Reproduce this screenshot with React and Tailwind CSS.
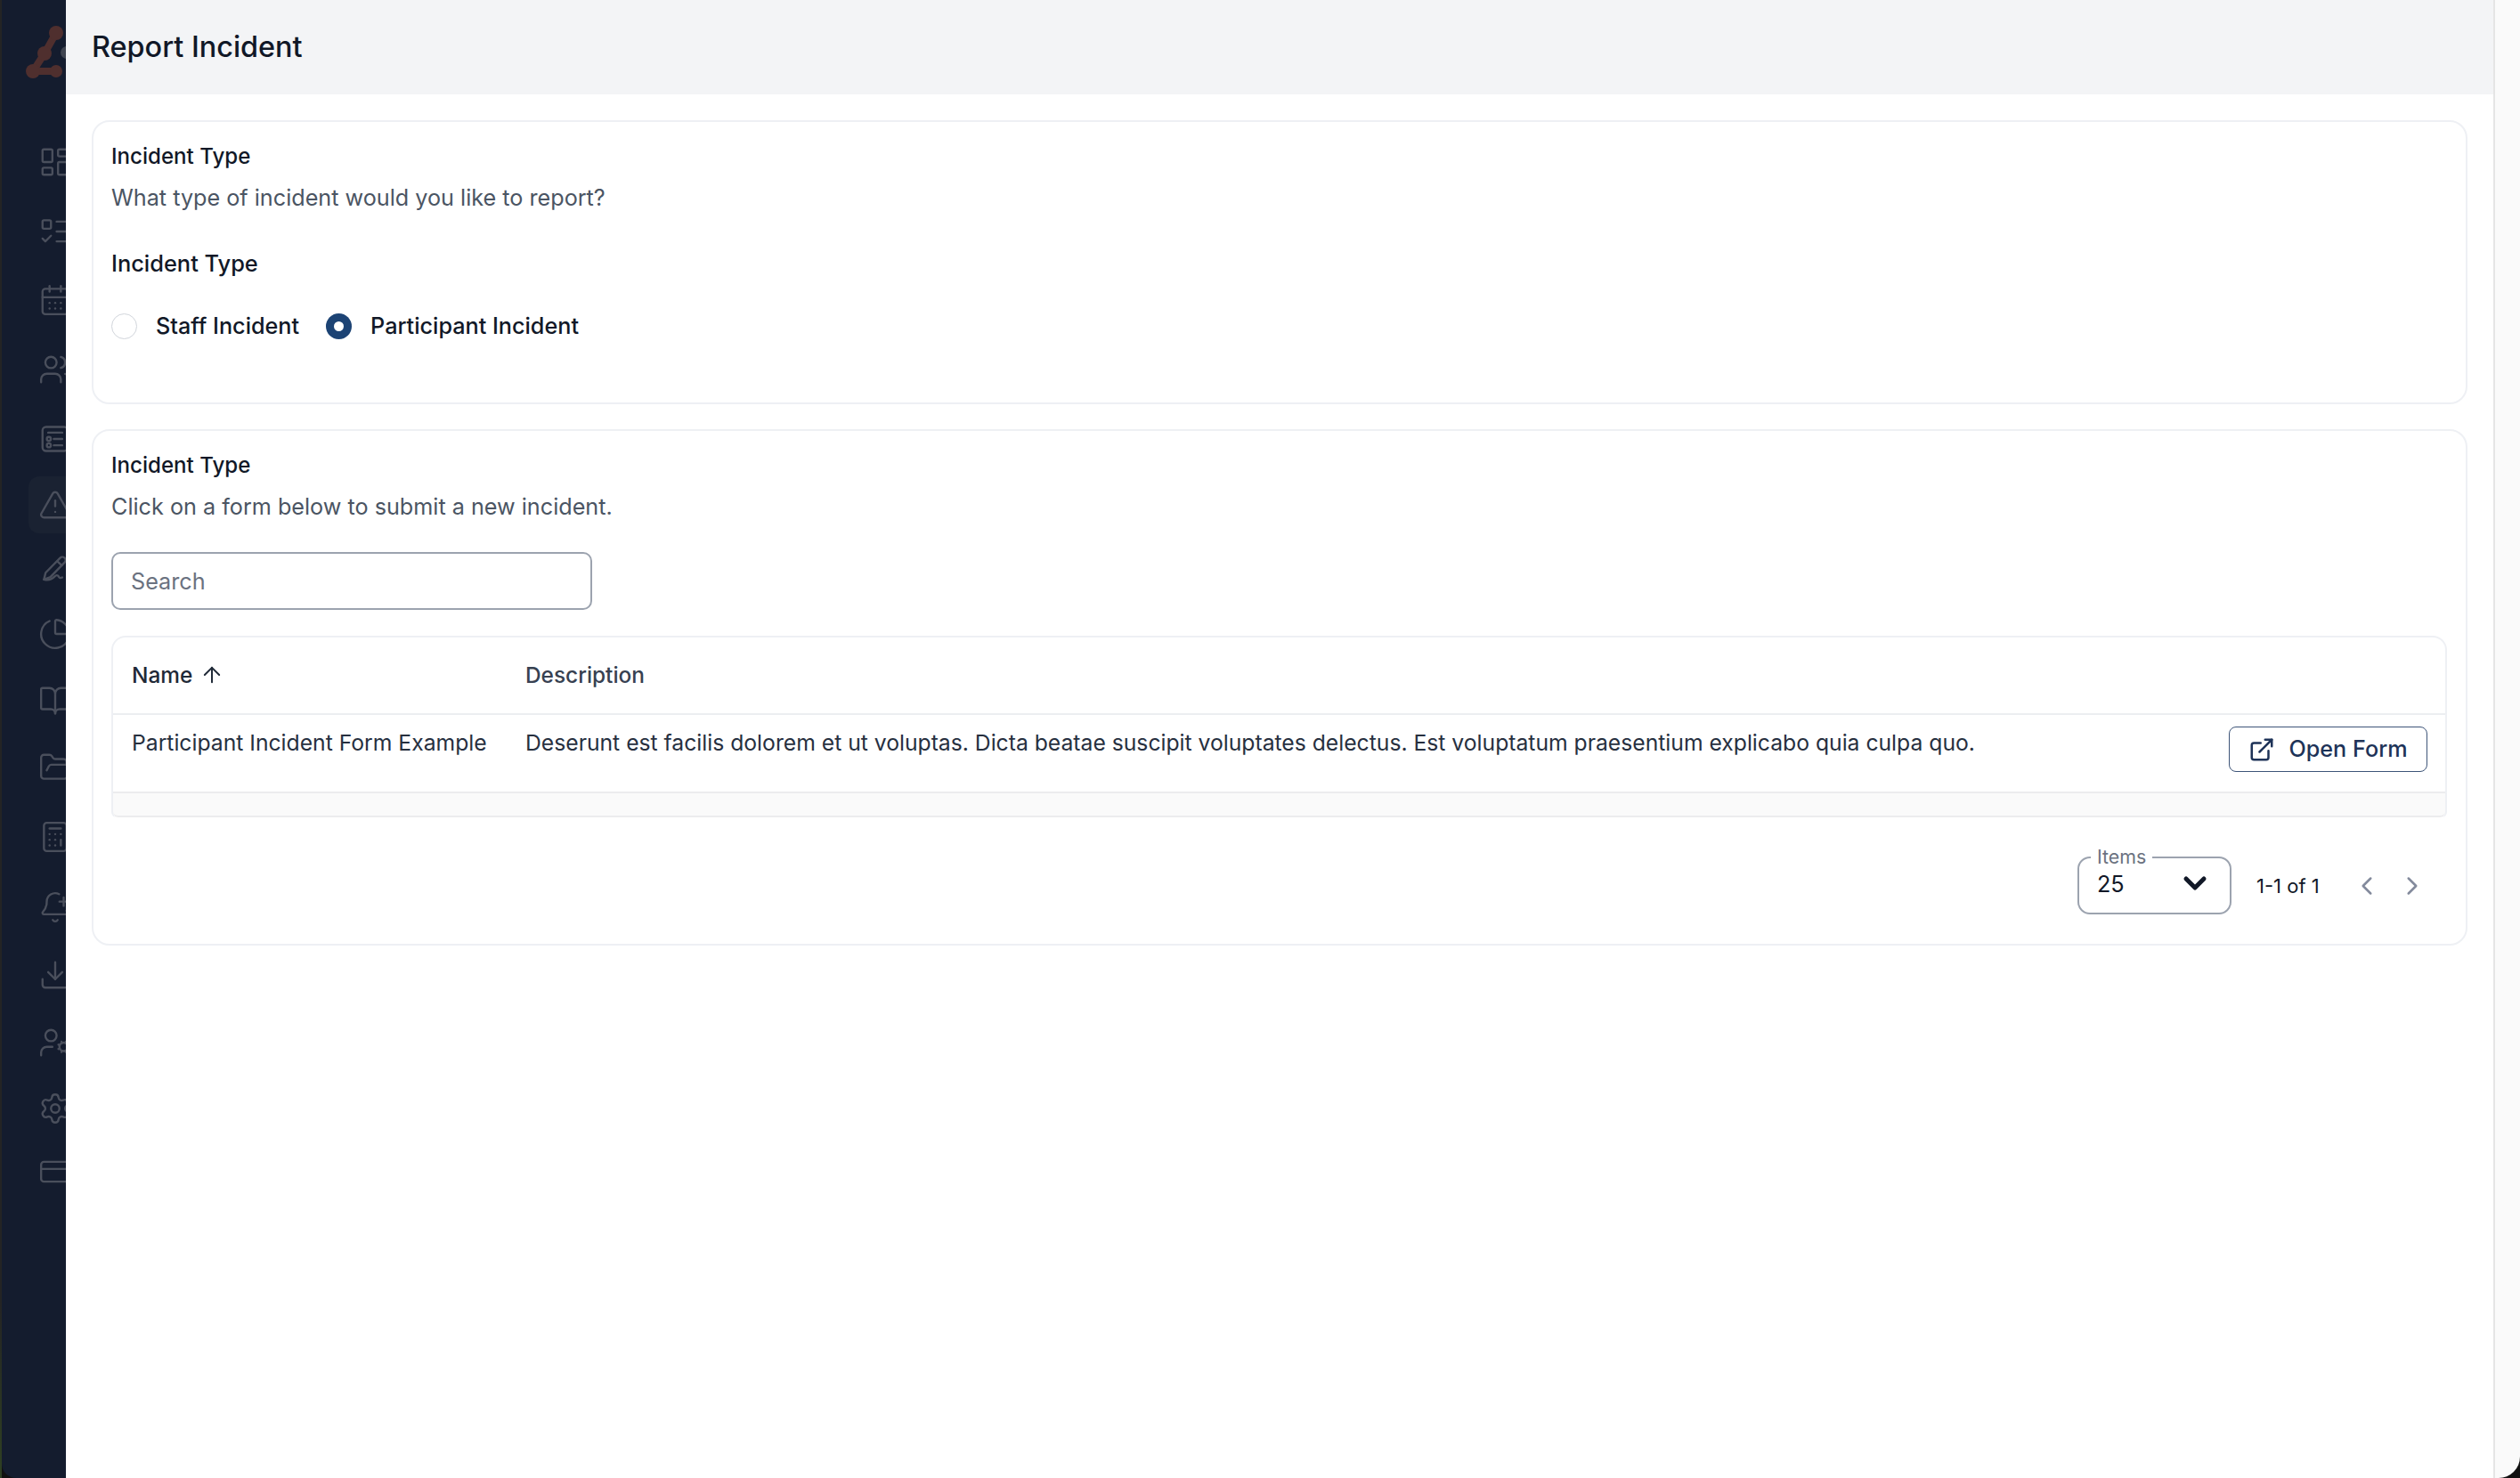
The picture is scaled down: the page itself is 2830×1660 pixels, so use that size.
import { ArrowUp, BellPlus, BookOpen, Calculator, CalendarDays, ChartPie, ChevronDown, ChevronLeft, ChevronRight, CreditCard, Download, ExternalLink, FolderOpen, LayoutDashboard, ListTodo, Settings, TriangleAlert, UserCog, Users } from 'lucide-react';

const ListCard = (props) => (
  <svg viewBox="0 0 24 24" fill="none" stroke="currentColor" strokeLinecap="round" strokeLinejoin="round" {...props}>
    <rect x="3" y="3.5" width="18" height="17" rx="2.5" />
    <path d="M7 7.5h10M11 12h6M11 16.5h6" />
    <circle cx="7.5" cy="12" r="1.4" />
    <circle cx="7.5" cy="16.5" r="1.4" />
  </svg>
);

const FountainPen = (props) => (
  <svg viewBox="0 0 24 24" fill="none" stroke="currentColor" strokeLinecap="round" strokeLinejoin="round" {...props}>
    <path d="M4 19.5l1.2-4.8L15.5 4.2a2.2 2.2 0 0 1 3.2 3.1L8.6 17.8z" />
    <path d="M4 19.5c3 .8 5.5 0 7.5-2 1.2-1.2 2.2-1.4 3 0 .5 1 1.3 1.2 2.5.5" />
    <path d="M13.5 6.5l3.2 3" />
  </svg>
);

const navItems = [
  { icon: LayoutDashboard, height: 'h-[80px]' },
  { icon: ListTodo, height: 'h-[76px]' },
  { icon: CalendarDays, height: 'h-[77px]' },
  { icon: Users, height: 'h-[80px]' },
  { icon: ListCard, height: 'h-[76px]' },
  { icon: TriangleAlert, height: 'h-[72px]', active: true },
  { icon: FountainPen, height: 'h-[72px]' },
  { icon: ChartPie, height: 'h-[74px]' },
  { icon: BookOpen, height: 'h-[75px]' },
  { icon: FolderOpen, height: 'h-[76px]' },
  { icon: Calculator, height: 'h-[80px]' },
  { icon: BellPlus, height: 'h-[77px]' },
  { icon: Download, height: 'h-[76px]' },
  { icon: UserCog, height: 'h-[76px]' },
  { icon: Settings, height: 'h-[72px]' },
  { icon: CreditCard, height: 'h-[70px]' },
];

const Sidebar = () => (
  <aside className="relative w-[72px] h-full shrink-0 bg-[#141c2e] rounded-bl-[16px] overflow-hidden">
    <div className="w-[120px] h-[142px] pl-[20px] pt-[22px]">
      <svg width="70" height="70" viewBox="22 22 70 70" fill="none">
        <path d="M63 37 L50 60 L37 80 L63 80" stroke="#4f2f2e" strokeWidth="8" strokeLinecap="round" strokeLinejoin="round" />
        <circle cx="63" cy="37" r="8" fill="#4f2f2e" />
        <circle cx="50" cy="60" r="8" fill="#4f2f2e" />
        <circle cx="37" cy="80" r="8" fill="#4f2f2e" />
        <circle cx="63" cy="80" r="7" fill="#4f2f2e" />
        <circle cx="75" cy="59" r="7" fill="#3f4450" />
      </svg>
    </div>
    {navItems.map(({ icon: Icon, height, active }, i) => (
      <div key={i} className={`flex items-center pl-[41px] w-[120px] ${height}`}>
        {active && <div className="absolute left-[30px] w-[80px] h-[64px] rounded-[12px] bg-[#1a2232]" />}
        <Icon width={38} height={38} strokeWidth={1.5} className="relative text-[#4a4f5c] shrink-0" />
      </div>
    ))}
  </aside>
);

const Radio = ({ checked, label }) => (
  <label className="flex items-center">
    {checked ? (
      <span className="w-[29px] h-[29px] rounded-full bg-[#1c4374] flex items-center justify-center">
        <span className="w-[11px] h-[11px] rounded-full bg-white" />
      </span>
    ) : (
      <span className="w-[29px] h-[29px] rounded-full border border-[#d1d5db] bg-white" />
    )}
    <span className="ml-[21px] text-[25.2px] leading-[36px] font-medium text-[#111827]">{label}</span>
  </label>
);

const CardHeading = ({ title, text }) => (
  <>
    <h2 className="text-[24.1px] leading-[36px] font-medium text-[#111827]">{title}</h2>
    <p className="mt-[10px] text-[25.2px] leading-[36px] text-[#4b5563]">{text}</p>
  </>
);

const App = () => {
  return (
    <div className="relative w-[2830px] h-[1660px] flex overflow-hidden bg-[#111111] font-['Inter',sans-serif]">
      <div className="w-[2px] h-full shrink-0 bg-[linear-gradient(180deg,#242424_88%,#2f4022_100%)]" />
      <Sidebar />
      <main className="w-[2726px] h-full shrink-0 bg-white">
        <header className="h-[106px] bg-[#f3f4f6] flex items-center pl-[29px]">
          <h1 className="text-[32.4px] leading-[46px] font-medium text-[#111827]">Report Incident</h1>
        </header>
        <div className="px-[29px] pt-[29px]">
          <section className="h-[319px] border-2 border-[#eef0f4] rounded-[20px] pl-[20px] pr-[21px] pt-[21px]">
            <CardHeading title="Incident Type" text="What type of incident would you like to report?" />
            <h3 className="mt-[38px] text-[25.4px] leading-[36px] font-medium text-[#111827]">Incident Type</h3>
            <div className="mt-[34px] flex items-center gap-[30px]">
              <Radio label="Staff Incident" />
              <Radio checked label="Participant Incident" />
            </div>
          </section>
          <section className="mt-[28px] h-[580px] border-2 border-[#eef0f4] rounded-[20px] pl-[20px] pr-[21px] pt-[21px]">
            <CardHeading title="Incident Type" text="Click on a form below to submit a new incident." />
            <input
              placeholder="Search"
              className="block mt-[33px] w-[540px] h-[65px] border-2 border-[#9ca3af] rounded-[10px] px-[20px] text-[25.2px] outline-none placeholder:text-[#6b7280]"
            />
            <div className="mt-[29px] border-2 border-[#eef0f4] rounded-t-[16px] rounded-b-[6px] border-b-0">
              <div className="h-[87px] flex items-center border-b-2 border-[#eceef1] text-[24.4px] font-medium text-[#374151]">
                <div className="w-[463px] pl-[21px] flex items-center gap-[8px] text-[#1f2937]">
                  Name <ArrowUp size={28} strokeWidth={1.7} />
                </div>
                <div>Description</div>
              </div>
              <div className="h-[86px] flex justify-between text-[24.7px] text-[#27303f]">
                <div className="flex pt-[13px]">
                  <div className="w-[463px] pl-[21px] leading-[36px]">Participant Incident Form Example</div>
                  <div className="leading-[36px]">Deserunt est facilis dolorem et ut voluptas. Dicta beatae suscipit voluptates delectus. Est voluptatum praesentium explicabo quia culpa quo.</div>
                </div>
                <button className="mt-[13px] mr-[20px] w-[223px] h-[51px] border-[1.5px] border-[#3d5478] rounded-[8px] flex items-center justify-center gap-[15px] text-[25.2px] font-medium text-[#1e3358]">
                  <ExternalLink size={30} strokeWidth={2} />
                  Open Form
                </button>
              </div>
              <div className="h-[29px] bg-[#fafafa] border-y-2 border-[#ececee] rounded-b-[6px]" />
            </div>
            <div className="mt-[46px] mr-[22px] flex items-center justify-end">
              <fieldset className="relative w-[173px] h-[71px] border-2 border-[#9ca3af] rounded-[14px] pl-[13px] -mt-[8px]">
                <legend className="px-[7px] text-[21.4px] leading-[13px] text-[#6b7280]">Items</legend>
                <div className="pl-[7px] text-[25.2px] leading-[34px] text-[#111827] mt-[7px]">25</div>
                <ChevronDown size={40} strokeWidth={3} className="absolute right-[19px] top-[3px] text-[#111827]" />
              </fieldset>
              <span className="ml-[28px] w-[90px] text-[22px] text-[#111827]">1-1 of 1</span>
              <ChevronLeft size={34} strokeWidth={1.8} className="ml-[17px] -mt-[2px] text-[#838a9c]" />
              <ChevronRight size={34} strokeWidth={1.8} className="ml-[17px] -mt-[2px] text-[#838a9c]" />
            </div>
          </section>
        </div>
      </main>
      <div className="flex-1 h-full bg-[#fafafa] border-l-2 border-[#e5e5e5] rounded-br-[24px]" />
    </div>
  );
};

export default App;
